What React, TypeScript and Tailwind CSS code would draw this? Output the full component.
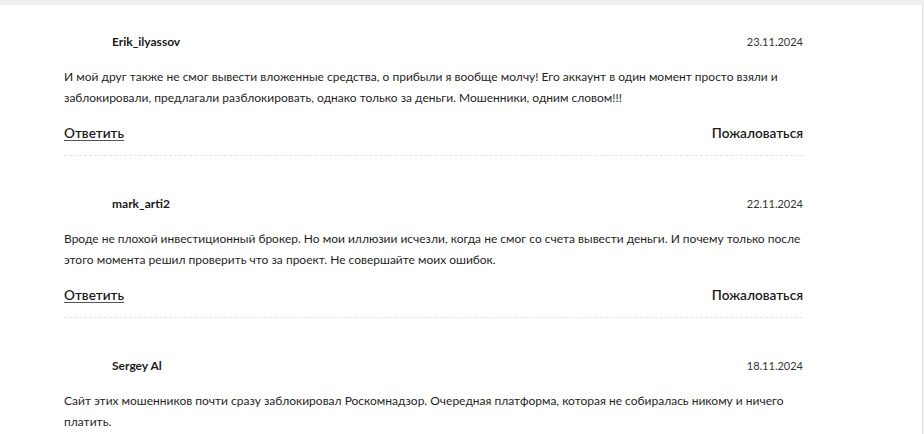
import React from "react";

interface Review {
  author: string;
  date: string;
  text: string;
}

const reviews: Review[] = [
  {
    author: "Erik_ilyassov",
    date: "23.11.2024",
    text: "И мой друг также не смог вывести вложенные средства, о прибыли я вообще молчу! Его аккаунт в один момент просто взяли и заблокировали, предлагали разблокировать, однако только за деньги. Мошенники, одним словом!!!",
  },
  {
    author: "mark_arti2",
    date: "22.11.2024",
    text: "Вроде не плохой инвестиционный брокер. Но мои иллюзии исчезли, когда не смог со счета вывести деньги. И почему только после этого момента решил проверить что за проект. Не совершайте моих ошибок.",
  },
  {
    author: "Sergey Al",
    date: "18.11.2024",
    text: "Сайт этих мошенников почти сразу заблокировал Роскомнадзор. Очередная платформа, которая не собиралась никому и ничего платить.",
  },
];

function ReviewItem({ review }: { review: Review }) {
  return (
    <div className="border-b border-dashed border-[#e6e6e6] pb-[12px] mb-[38px]">
      {/* Header */}
      <div className="flex items-center justify-between pl-[48px] h-[20px]">
        <span className="text-[12px] font-bold text-[#1a1a1a]">{review.author}</span>
        <span className="text-[11px] text-[#333]">{review.date}</span>
      </div>

      {/* Body */}
      <p className="mt-[14px] text-[12px] leading-[21px] text-[#1f1f1f]">{review.text}</p>

      {/* Actions */}
      <div className="mt-[15px] flex items-center justify-between h-[20px]">
        <a className="text-[13.6px] font-semibold text-[#1a1a1a] underline decoration-[#555] underline-offset-[2px] cursor-pointer">
          Ответить
        </a>
        <button className="text-[13.6px] font-semibold text-[#1a1a1a] cursor-pointer">
          Пожаловаться
        </button>
      </div>
    </div>
  );
}

export default function App() {
  return (
    <div
      className="min-h-screen bg-[#f0f0f0] pt-[5px] pr-[1px]"
      style={{ fontFamily: "Lato, 'Noto Sans', sans-serif" }}
    >
      <div className="bg-white border-r border-[#e2e2e2] min-h-[429px]">
        <div className="w-[739px] ml-[64px] pt-[27px]">
          {reviews.map((r) => (
            <ReviewItem key={r.author} review={r} />
          ))}
        </div>
      </div>
    </div>
  );
}
